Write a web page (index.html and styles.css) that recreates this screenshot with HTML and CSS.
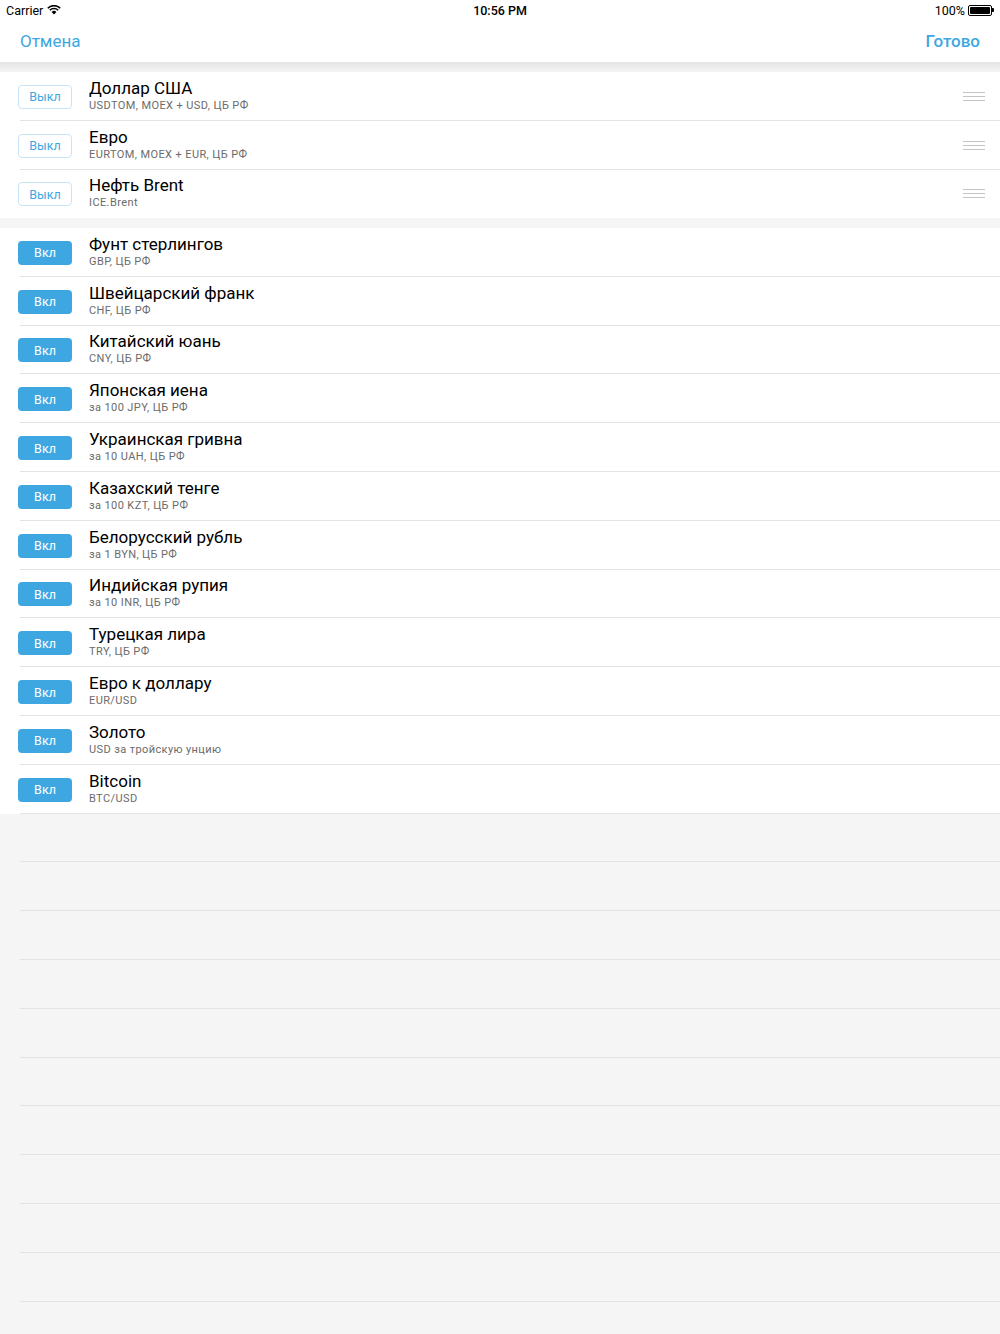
FILE: index.html
```html
<!DOCTYPE html>
<html lang="ru">
<head>
<meta charset="utf-8">
<link rel="stylesheet" href="styles.css">
</head>
<body>
<div class="status">
  <div class="st-left">Carrier
    <svg class="wifi" width="14" height="10" viewBox="0 0 14 10"><path d="M7 9.5 L4.6 7 A3.4 3.4 0 0 1 9.4 7 Z" fill="#000"/><path d="M2.8 5.2 A6 6 0 0 1 11.2 5.2" stroke="#000" stroke-width="1.6" fill="none"/><path d="M0.8 3.2 A8.8 8.8 0 0 1 13.2 3.2" stroke="#000" stroke-width="1.6" fill="none"/></svg>
  </div>
  <div class="st-time">10:56 PM</div>
  <div class="st-right">100%
    <span class="battery"><span class="batt-fill"></span></span><span class="batt-tip"></span>
  </div>
</div>
<div class="nav">
  <span class="nav-btn">Отмена</span>
  <span class="nav-btn bold">Готово</span>
</div>
<div class="shadow"></div>
<div class="section">
  <div class="row"><span class="btn off">Выкл</span><div class="txt"><div class="title">Доллар США</div><div class="sub">USDTOM, MOEX + USD, ЦБ РФ</div></div><span class="grip"><i></i><i></i><i></i></span></div>
  <div class="row"><span class="btn off">Выкл</span><div class="txt"><div class="title">Евро</div><div class="sub">EURTOM, MOEX + EUR, ЦБ РФ</div></div><span class="grip"><i></i><i></i><i></i></span></div>
  <div class="row last"><span class="btn off">Выкл</span><div class="txt"><div class="title">Нефть Brent</div><div class="sub">ICE.Brent</div></div><span class="grip"><i></i><i></i><i></i></span></div>
</div>
<div class="gap"></div>
<div class="section">
  <div class="row"><span class="btn on">Вкл</span><div class="txt"><div class="title">Фунт стерлингов</div><div class="sub">GBP, ЦБ РФ</div></div></div>
  <div class="row"><span class="btn on">Вкл</span><div class="txt"><div class="title">Швейцарский франк</div><div class="sub">CHF, ЦБ РФ</div></div></div>
  <div class="row"><span class="btn on">Вкл</span><div class="txt"><div class="title">Китайский юань</div><div class="sub">CNY, ЦБ РФ</div></div></div>
  <div class="row"><span class="btn on">Вкл</span><div class="txt"><div class="title">Японская иена</div><div class="sub">за 100 JPY, ЦБ РФ</div></div></div>
  <div class="row"><span class="btn on">Вкл</span><div class="txt"><div class="title">Украинская гривна</div><div class="sub">за 10 UAH, ЦБ РФ</div></div></div>
  <div class="row"><span class="btn on">Вкл</span><div class="txt"><div class="title">Казахский тенге</div><div class="sub">за 100 KZT, ЦБ РФ</div></div></div>
  <div class="row"><span class="btn on">Вкл</span><div class="txt"><div class="title">Белорусский рубль</div><div class="sub">за 1 BYN, ЦБ РФ</div></div></div>
  <div class="row"><span class="btn on">Вкл</span><div class="txt"><div class="title">Индийская рупия</div><div class="sub">за 10 INR, ЦБ РФ</div></div></div>
  <div class="row"><span class="btn on">Вкл</span><div class="txt"><div class="title">Турецкая лира</div><div class="sub">TRY, ЦБ РФ</div></div></div>
  <div class="row"><span class="btn on">Вкл</span><div class="txt"><div class="title">Евро к доллару</div><div class="sub">EUR/USD</div></div></div>
  <div class="row"><span class="btn on">Вкл</span><div class="txt"><div class="title">Золото</div><div class="sub">USD за тройскую унцию</div></div></div>
  <div class="row"><span class="btn on">Вкл</span><div class="txt"><div class="title">Bitcoin</div><div class="sub">BTC/USD</div></div></div>
</div>
<div class="empty">
  <div class="erow"></div><div class="erow"></div><div class="erow"></div><div class="erow"></div>
  <div class="erow"></div><div class="erow"></div><div class="erow"></div><div class="erow"></div>
  <div class="erow"></div><div class="erow"></div><div class="erow"></div>
</div>
</body>
</html>
```
FILE: styles.css
```css
* { box-sizing: border-box; }
html, body { margin: 0; padding: 0; }
body {
  width: 1000px;
  height: 1334px;
  overflow: hidden;
  background: #f5f5f5;
  font-family: "Roboto", "Liberation Sans", "Noto Sans", sans-serif;
  color: #000;
}
.status {
  height: 20px;
  background: #fff;
  display: flex;
  align-items: center;
  justify-content: space-between;
  padding: 0 6px;
  font-size: 12.5px;
  position: relative;
}
.st-left { display: flex; align-items: center; gap: 4px; }
.st-time {
  position: absolute;
  left: 0; right: 0;
  text-align: center;
  font-weight: 500;
  pointer-events: none;
}
.st-right { display: flex; align-items: center; }
.battery {
  margin-left: 3px;
  width: 24px;
  height: 11px;
  border: 1px solid #000;
  border-radius: 2px;
  padding: 1px;
  display: inline-flex;
}
.batt-fill { flex: 1; background: #000; border-radius: 1px; }
.batt-tip { width: 2px; height: 4px; background: #000; border-radius: 0 1px 1px 0; }
.nav {
  height: 42px;
  background: #fff;
  display: flex;
  align-items: center;
  justify-content: space-between;
  padding: 0 20px;
}
.nav-btn { font-size: 17px; color: #3ea7e0; }
.nav-btn.bold { font-weight: 500; }
.shadow {
  height: 10px;
  background: linear-gradient(#e4e4e4, #f5f5f5);
}
.section { background: #fff; }
.row {
  height: 48.8px;
  display: flex;
  align-items: center;
  position: relative;
  padding-left: 18px;
  padding-right: 15px;
}
.row::after {
  content: "";
  position: absolute;
  left: 20px; right: 0; bottom: 0;
  height: 1px;
  background: #e3e3e3;
}
.row.last::after { display: none; }
.btn {
  width: 54px;
  height: 24px;
  border-radius: 4px;
  display: flex;
  align-items: center;
  justify-content: center;
  font-size: 12.5px;
  flex: none;
  margin-top: 1px;
}
.btn.off { border: 1px solid #c7e5f7; color: #3ea7e0; background: #fff; }
.btn.on { background: #3ea7e2; color: #fff; }
.txt { margin-left: 17px; flex: 1; margin-top: -1px; }
.title { font-size: 17px; line-height: 19px; }
.sub { font-size: 11px; color: #6b6b6b; line-height: 14px; margin-top: 1px; letter-spacing: 0.4px; }
.grip {
  width: 22px;
  display: flex;
  flex-direction: column;
  gap: 3px;
}
.grip i { display: block; height: 1px; background: #c4c4c8; }
.gap { height: 9.6px; background: #f5f5f5; }
.empty { background: #f5f5f5; }
.erow { height: 48.8px; border-bottom: 1px solid #e3e3e3; margin-left: 20px; }
```
